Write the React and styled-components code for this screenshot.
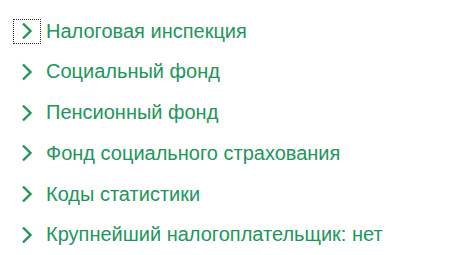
import React from "react";
import styled, { createGlobalStyle } from "styled-components";

const GlobalStyle = createGlobalStyle`
  html, body {
    margin: 0;
    padding: 0;
    background: #fff;
  }
`;

const items = [
  "Налоговая инспекция",
  "Социальный фонд",
  "Пенсионный фонд",
  "Фонд социального страхования",
  "Коды статистики",
  "Крупнейший налогоплательщик: нет",
];

const List = styled.div`
  display: flex;
  flex-direction: column;
  gap: 12.8px;
  padding: 17px 0 0 13px;
  font-family: Arial, "Liberation Sans", sans-serif;
`;

const Row = styled.div`
  display: flex;
  align-items: center;
  height: 28px;
  color: #21965a;
  font-size: 20px;
`;

const Toggle = styled.span`
  display: flex;
  align-items: center;
  justify-content: center;
  width: 28px;
  height: 25px;
  box-sizing: border-box;
  border: 1px dotted ${(p) => (p.focused ? "#333" : "transparent")};
  margin-right: 5px;
`;

const Chevron = () => (
  <svg width="14" height="18" viewBox="0 0 14 18">
    <path d="M3 1.5 L10.5 9 L3 16.5" fill="none" stroke="#21965a" strokeWidth="2.4" />
  </svg>
);

export default function App() {
  return (
    <>
      <GlobalStyle />
      <List>
        {items.map((t, i) => (
          <Row key={t}>
            <Toggle focused={i === 0}>
              <Chevron />
            </Toggle>
            {t}
          </Row>
        ))}
      </List>
    </>
  );
}
